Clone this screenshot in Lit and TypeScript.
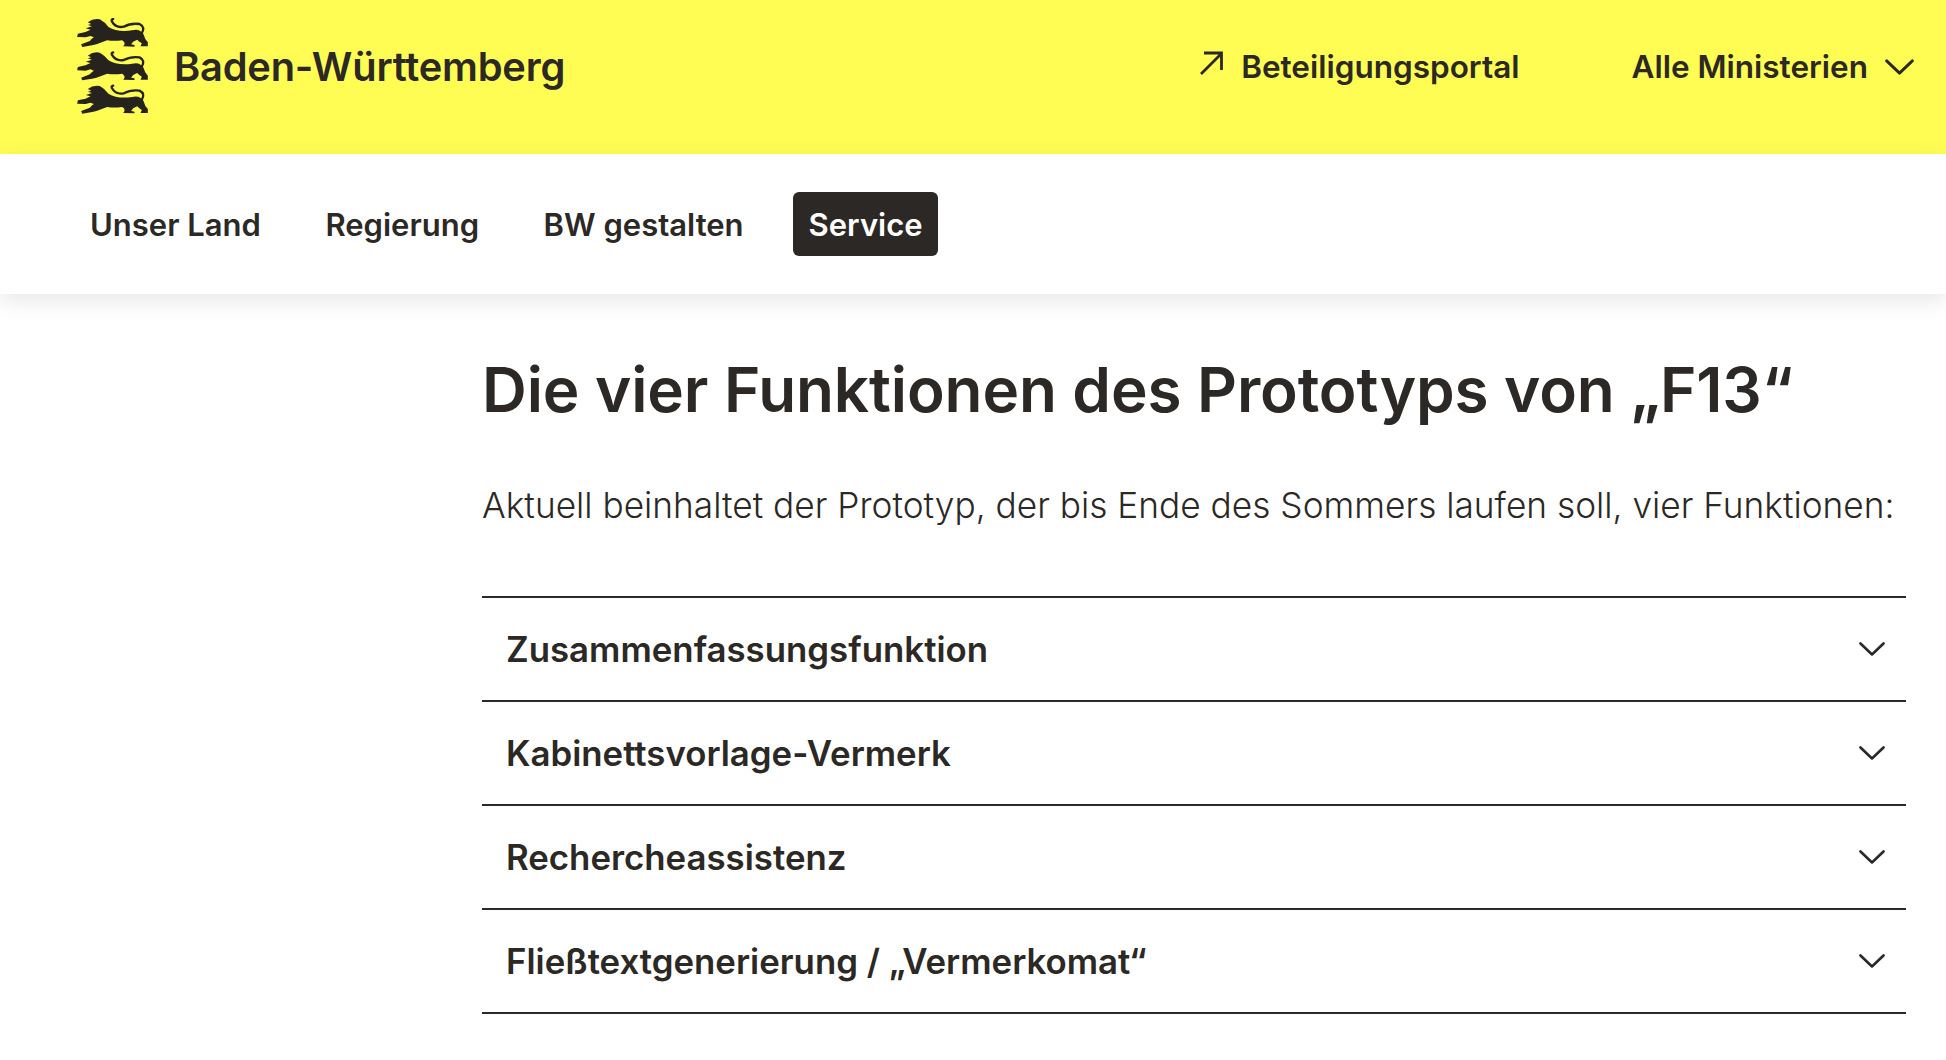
import { LitElement, html, css, svg } from "lit";
import { customElement } from "lit/decorators.js";

const lion = svg`<g>
<path d="M52 38 Q68 25 88 29 Q104 38 114 52 Q140 68 185 62 Q208 56 219 74 Q223 90 232 98 L232 110 L210 110 L214 101 Q206 96 200 90 L188 96 L182 104 L192 106 L192 111 L158 110 Q168 100 155 92 Q130 95 110 92 L78 104 L65 107 L35 112 L32 104 L58 94 Q62 88 70 83 L60 79 L45 83 L20 82 L22 72 L45 67 L60 60 L46 56 L64 50 L52 46 L62 43 Z" fill="currentColor"/>
<path d="M213 72 Q226 52 207 43 Q180 40 160 51 Q136 56 124 35 Q122 29 128 28" fill="none" stroke="currentColor" stroke-width="7" stroke-linecap="round"/>
</g>`;

const chevron = html`<svg class="chev" viewBox="0 0 26 14" aria-hidden="true"><path d="M1.5 1.5 L13 12.5 L24.5 1.5" fill="none" stroke="currentColor" stroke-width="2.6" stroke-linecap="round" stroke-linejoin="round"/></svg>`;

@customElement("app-root")
export class AppRoot extends LitElement {
  static styles = css`
    :host { display: block; min-height: 1060px; background: #fff; color: #2b2825; font-family: Inter, "Liberation Sans", sans-serif; overflow: hidden; }
    .top { height: 154px; box-sizing: border-box; background: #fffd54; display: flex; align-items: center; padding: 0 32px 22px 77px; }
    .logo { width: 72px; height: 96px; display: block; flex: none; color: #26231f; }
    .brand { font-size: 39.8px; font-weight: 600; margin-left: 25px; letter-spacing: -0.2px; }
    .spacer { flex: 1; }
    .portal, .minis { display: flex; align-items: center; font-size: 31.5px; font-weight: 600; }
    .portal svg { width: 24px; height: 24px; margin-right: 18px; margin-top: -6px; }
    .minis { margin-left: 112px; padding-top: 1px; }
    .top .chev { width: 29px; height: 16px; margin-left: 17px; }
    nav { height: 140px; box-sizing: border-box; display: flex; align-items: center; padding: 0 0 0 74px; gap: 32.5px; box-shadow: 0 6px 22px rgba(0,0,0,.1); position: relative; }
    nav a { font-size: 31px; font-weight: 600; padding: 0 16px; height: 64px; display: flex; align-items: center; border-radius: 6px; }
    nav a.on { background: #2b2825; color: #fff; margin-left: 1px; width: 113px; justify-content: center; padding: 0 16px; }
    main { padding: 0 40px 0 482px; }
    h1 { margin: 0; font-size: 62px; line-height: 72px; font-weight: 600; padding-top: 60px; letter-spacing: -0.1px; }
    p { margin: 0; font-size: 35.25px; line-height: 46px; font-weight: 300; padding: 57px 0 67px 0; white-space: nowrap; }
    .row { height: 104px; box-sizing: border-box; border-top: 2px solid #2b2825; display: flex; align-items: center; justify-content: space-between; padding: 0 21px 0 24px; font-size: 34.8px; font-weight: 600; }
    .row:last-child { border-bottom: 2px solid #2b2825; height: 106px; }
    .row .chev { width: 26px; height: 14px; }
  `;
  render() {
    return html`
      <header class="top">
        <svg class="logo" viewBox="20 25 215 288" aria-hidden="true">
          ${lion}
          <g transform="translate(0 100)">${lion}</g>
          <g transform="translate(0 200)">${lion}</g>
        </svg>
        <div class="brand">Baden-Württemberg</div>
        <div class="spacer"></div>
        <div class="portal">
          <svg viewBox="0 0 24 24" aria-hidden="true"><path d="M2 23 L22 3 M5 2 H22.5 V19" fill="none" stroke="currentColor" stroke-width="2.8"/></svg>
          Beteiligungsportal
        </div>
        <div class="minis">Alle Ministerien ${chevron}</div>
      </header>
      <nav>
        <a>Unser Land</a><a>Regierung</a><a>BW gestalten</a><a class="on">Service</a>
      </nav>
      <main>
        <h1>Die vier Funktionen des Prototyps von „F13“</h1>
        <p>Aktuell beinhaltet der Prototyp, der bis Ende des Sommers laufen soll, vier Funktionen:</p>
        <div class="list">
          ${["Zusammenfassungsfunktion", "Kabinettsvorlage-Vermerk", "Rechercheassistenz", "Fließtextgenerierung / „Vermerkomat“"].map(
            (t) => html`<div class="row"><span>${t}</span>${chevron}</div>`
          )}
        </div>
      </main>
    `;
  }
}
